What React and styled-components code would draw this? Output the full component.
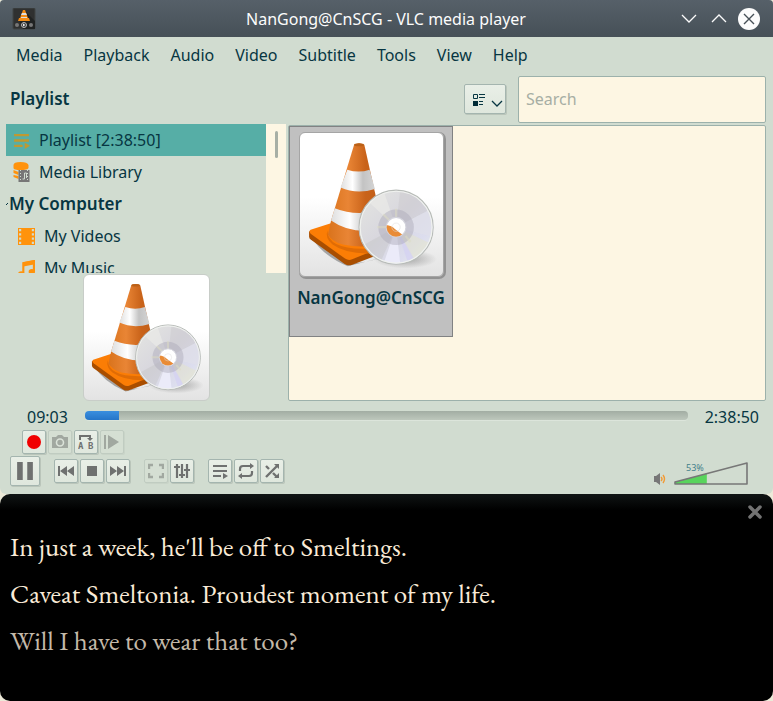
import React, { useId, useState } from "react";
import styled, { createGlobalStyle } from "styled-components";

const ink = "#073642";
const glyph = "#6f7170";

const GlobalStyle = createGlobalStyle`
  *, *::before, *::after { box-sizing: border-box; }
  body { margin: 0; background: #ece9d8; }
  button, input { font: inherit; color: inherit; }
  svg { display: block; flex: none; }
`;

const Desktop = styled.div`
  min-height: 100vh;
  display: flex;
  flex-direction: column;
  font: 16px/24px "Noto Sans", sans-serif;
  color: ${ink};
`;

const PlayerWindow = styled.div`
  padding-bottom: 6px;
  background: #d1dcd0;
  border-radius: 4px 4px 6px 6px;
  overflow: hidden;
`;

const TitleBar = styled.header`
  display: grid;
  grid-template-columns: 1fr auto 1fr;
  align-items: center;
  height: 37px;
  padding: 0 13px 0 12px;
  background: linear-gradient(#566069, #465057);
  color: #fcfcfc;
`;

const Title = styled.h1`
  margin: 0;
  font-size: 16px;
  font-weight: 400;
`;

const WindowButtons = styled.div`
  display: flex;
  justify-content: flex-end;
  gap: 8px;
`;

const PlainButton = styled.button`
  display: grid;
  place-items: center;
  width: 22px;
  height: 22px;
  padding: 0;
  border: 0;
  background: none;
`;

const MenuBar = styled.nav`
  display: flex;
  gap: 1px;
  height: 37px;
  padding: 0 6px 2px;
`;

const MenuButton = styled.button`
  padding: 0 10px;
  border: 0;
  background: none;
`;

const Heading = styled.h2`
  flex: 1;
  margin: 0;
  font-size: 17px;
  font-weight: 600;
`;

const ListHeader = styled.div`
  display: flex;
  align-items: center;
  height: 50px;
  padding: 0 7px 0 10px;
`;

const Raised = styled.button`
  display: grid;
  place-items: center;
  width: ${(p) => p.$size || 24}px;
  height: ${(p) => p.$size || 24}px;
  padding: 0;
  border: 1px solid #a4b5af;
  border-radius: 2px;
  background: linear-gradient(#e9efe7, #dfe7dd);
  box-shadow: 1px 1px 0 #bac5ba;
  &:disabled {
    border-color: #c0ccc1;
    background: #d5dfd3;
    box-shadow: 1px 1px 0 #c9d4c8;
  }
`;

const ViewButton = styled(Raised)`
  display: flex;
  align-items: center;
  gap: 6px;
  width: 42px;
  height: 30px;
  padding-left: 8px;
  margin-right: 12px;
`;

const Search = styled.input`
  width: 248px;
  height: 47px;
  padding: 0 7px;
  border: 1px solid #9cb1ab;
  border-radius: 2px;
  background: #fdf6e3;
  outline: 0;
  &::placeholder { color: #a7aea4; opacity: 1; }
`;

const Content = styled.main`
  display: flex;
  gap: 2px;
  padding: 0 7px 0 6px;
`;

const Sidebar = styled.aside`
  display: flex;
  flex-direction: column;
  align-items: center;
  width: 280px;
  gap: 1px;
`;

const TreePane = styled.div`
  display: flex;
  width: 100%;
  height: 149px;
`;

const Tree = styled.ul`
  flex: 1;
  margin: 0;
  padding: 0;
  overflow: hidden;
  list-style: none;
`;

const TreeRow = styled.li`
  display: flex;
  align-items: center;
  gap: 9px;
  height: 32px;
  padding-left: ${(p) => (p.$nested ? 12 : 7)}px;
  background: ${(p) => (p.$selected ? "#56aea6" : "transparent")};
`;

const TreeGroup = styled.li`
  display: flex;
  align-items: center;
  height: 32px;
  font-size: 17px;
  font-weight: 600;
`;

const Scroller = styled.div`
  display: flex;
  justify-content: center;
  width: 20px;
  padding-top: 7px;
  background: #fdf6e3;
`;

const ScrollHandle = styled.div`
  width: 3px;
  height: 27px;
  border-radius: 2px;
  background: #a7afa5;
`;

const Gallery = styled.section`
  flex: 1;
  min-height: 276px;
  margin-top: 1px;
  border: 1px solid #9cb1ab;
  border-radius: 2px;
  background: #fdf6e3;
`;

const Card = styled.figure`
  display: flex;
  flex-direction: column;
  align-items: center;
  gap: 9px;
  width: 164px;
  height: 211px;
  margin: 0;
  padding-top: 5px;
  border: 1px solid #818283;
  background: #c0c0c0;
`;

const CardTitle = styled.figcaption`
  font-size: 17px;
  font-weight: 600;
`;

const Frame = styled.div`
  border: 1px solid ${(p) => (p.$strong ? "#a5a5a5" : "#c8cdc8")};
  border-radius: 6px;
  box-shadow: ${(p) => (p.$strong ? "1px 1px 0 1px #929292" : "none")};
  background: linear-gradient(#fff 45%, #e3e3e3);
`;

const SeekRow = styled.div`
  display: flex;
  align-items: center;
  gap: 17px;
  height: 24px;
  margin-top: 4px;
  padding: 0 14px 0 27px;
`;

const Seek = styled.input`
  flex: 1;
  min-width: 0;
  height: 9px;
  margin: 0 0 4px;
  appearance: none;
  border-radius: 4px;
  background:
    linear-gradient(#3a8fdf, #2575c8) 0 0 / ${(p) => p.$done}% 100% no-repeat,
    linear-gradient(#a2ada3, #bdc7bc);
  box-shadow: 0 1px 0 #dce5db;
  &::-webkit-slider-thumb { appearance: none; width: 0; height: 9px; }
`;

const ExtraControls = styled.div`
  display: flex;
  gap: 2px;
  margin-top: 1px;
  padding-left: 22px;
`;

const Controls = styled.div`
  display: flex;
  align-items: center;
  gap: 14px;
  height: 34px;
  padding: 0 25px 0 10px;
`;

const Group = styled.div`
  display: flex;
  gap: 2px;
`;

const Volume = styled.div`
  display: flex;
  align-items: flex-end;
  gap: 8px;
  margin-left: auto;
  padding-top: 5px;
`;

const VolumeRamp = styled.div`
  position: relative;
`;

const VolumeInput = styled.input`
  position: absolute;
  inset: 0;
  width: 100%;
  height: 100%;
  margin: 0;
  opacity: 0;
`;

const Percent = styled.label`
  position: absolute;
  top: 0;
  left: 12px;
  font-size: 9px;
  line-height: 12px;
  color: #43808a;
`;

const Lyrics = styled.section`
  flex: 1;
  padding: 29px 10px 35px;
  position: relative;
  border-radius: 10px;
  background: linear-gradient(#101414, #000 16px);
  color: #faebd7;
  font: 27px/47px "EB Garamond", "Liberation Serif", serif;
`;

const Line = styled.p`
  margin: 0;
  color: ${(p) => (p.$dim ? "#c4b9a9" : "inherit")};
`;

const Dismiss = styled(PlainButton)`
  position: absolute;
  top: 7px;
  right: 7px;
`;

function Artwork({ size }) {
  const id = useId();
  const u = (n) => `url(#${id}${n})`;
  return (
    <svg width={size} height={size} viewBox="0 0 378 378" role="img" aria-label="Traffic cone and disc">
      <defs>
        <linearGradient id={id + "o"}>
          <stop offset="0" stopColor="#d9731c" /><stop offset=".35" stopColor="#e98535" />
          <stop offset=".65" stopColor="#c9631a" /><stop offset="1" stopColor="#bd5c17" />
        </linearGradient>
        <linearGradient id={id + "w"}>
          <stop offset="0" stopColor="#dedede" /><stop offset=".35" stopColor="#fff" />
          <stop offset=".65" stopColor="#c3c3c3" /><stop offset="1" stopColor="#d4d4d4" />
        </linearGradient>
        <linearGradient id={id + "d"} x1="0" y1="0" x2="1" y2="1">
          <stop offset="0" stopColor="#e5e6e1" /><stop offset=".45" stopColor="#d8d7de" />
          <stop offset=".75" stopColor="#dcddee" /><stop offset="1" stopColor="#e9efe9" />
        </linearGradient>
        <radialGradient id={id + "s"}>
          <stop offset="0" stopColor="#777" stopOpacity=".6" /><stop offset="1" stopColor="#777" stopOpacity="0" />
        </radialGradient>
        <clipPath id={id + "h"}><circle cx="254" cy="249" r="25" /></clipPath>
        <clipPath id={id + "c"}><circle cx="254" cy="249" r="95" /></clipPath>
      </defs>
      <ellipse cx="278" cy="333" rx="84" ry="25" fill={u("s")} />
      <path d="M28 272 Q60 325 126 352 L215 330 Q150 350 126 340Z" fill="#777" opacity=".6" />
      <path d="M24 260v14q0 5 5 8l89 64q9 6 20 2l64-24v-17Z" fill="#a94e00" />
      <path d="M28 256 Q22 260 29 267 L119 332Q128 338 138 334L225 298V250L90 236Z" fill="#fb7d05" />
      <path d="M72 258q2 48 93 48h40v11q-78 7-119-22-20-16-14-37Z" fill="#e06c05" />
      <path d="M143 31Q156 23 170 31L226 282Q188 310 113 295Q83 286 74 268L82 232Z" fill={u("o")} />
      <path d="M125 97Q155 107 184 97L198 148Q150 163 107 144Z" fill={u("w")} />
      <path d="M92 199Q146 221 212 204L224 252Q140 272 82 231Z" fill={u("w")} />
      <ellipse cx="156" cy="31" rx="13" ry="4" fill="#bb6117" />
      <circle cx="254" cy="249" r="98" fill={u("d")} stroke="#b8bcb8" strokeWidth="3" />
      <g clipPath={u("c")}>
        <path d="M254 249 265 149Q315 153 340 204Z" fill="#cac8cc" opacity=".45" />
        <path d="M254 249 340 204 356 276Z" fill="#e0e0e9" opacity=".7" />
        <path d="M254 249 345 292 303 341Z" fill="#e7e5c1" opacity=".4" />
        <path d="M254 249 212 343 170 295Z" fill="#bfc1bf" opacity=".35" />
        <path d="M254 249 179 180 221 153Z" fill="#e9e9e6" opacity=".8" />
        <path d="M254 249 265 345 222 342Z" fill="#efeffc" opacity=".8" />
        <path d="M254 249 300 330 285 341Z" fill="#d5d2f1" opacity=".8" />
      </g>
      <circle cx="254" cy="249" r="36" fill="none" stroke="#aaa8b8" strokeWidth="22" opacity=".45" />
      <path d="m220 215 17 17m-33 17h24m26-49v24m25 48 13 16" stroke="#dddcc2" strokeWidth="6" opacity=".5" />
      <circle cx="254" cy="249" r="26" fill="#fff" stroke="#d3d3dc" strokeWidth="3" />
      <path clipPath={u("h")} d="M225 243Q242 244 250 253L270 268 258 279H225Z" fill="#e98b36" />
      <circle cx="254" cy="249" r="11" fill="none" stroke="#ddd" strokeWidth="2" opacity=".7" />
      <circle cx="254" cy="249" r="95" fill="none" stroke="#f0f2ef" strokeWidth="3" />
    </svg>
  );
}

const drawings = {
  record: <circle cx="8" cy="8" r="7" fill="#f00000" />,
  camera: <><path d="M0 3h4l2-2h4l2 2h4v11H0Z" fill="#a1a8a0" /><circle cx="8" cy="8.5" r="3.5" fill="#a1a8a0" stroke="#dbe3d9" strokeWidth="1.6" /></>,
  ab: (
    <>
      <path d="M2 6V2h10v3" fill="none" stroke={glyph} strokeWidth="2" />
      <path d="M9 4h6l-3 3Z" fill={glyph} />
      <text x="0" y="15" fill={glyph} fontFamily="DejaVu Sans Mono, monospace" fontWeight="700" fontSize="9">A</text>
      <text x="10" y="15" fill={glyph} fontFamily="DejaVu Sans Mono, monospace" fontWeight="700" fontSize="9">B</text>
    </>
  ),
  frame: <path d="M0 1h2v14H0Zm4 0 11 7-11 7Z" fill="#a1a8a0" />,
  pause: <path d="M1 0h5v16h-5Zm9 0h5v16h-5Z" fill={glyph} />,
  prev: <path d="M0 3h2v10H0Zm9 0v10L2 8Zm7 0v10L9 8Z" fill={glyph} />,
  stop: <path d="M3 3h10v10H3Z" fill={glyph} />,
  next: <path d="M14 3h2v10h-2ZM0 3l7 5-7 5Zm7 0 7 5-7 5Z" fill={glyph} />,
  full: <path d="M1 6V2h4m6 0h4v4M1 10v4h4m6 0h4v-4" fill="none" stroke="#a1a8a0" strokeWidth="2.4" />,
  eq: <path d="M3 1v14M8 1v14M13 1v14M0 4h6M5 12h6m-1-5h6" fill="none" stroke={glyph} strokeWidth="2.2" />,
  list: <><path d="M1 3h14M1 8h14M1 13h8" stroke="currentColor" strokeWidth="2.2" /><path d="m11 10 5 3-5 3Z" fill="currentColor" /></>,
  loop: <><path d="M2 8V6q0-3 3-3h8M14 8v2q0 3-3 3H3" fill="none" stroke={glyph} strokeWidth="2.2" /><path d="m12 0 4 3-4 3ZM4 10l-4 3 4 3Z" fill={glyph} /></>,
  shuffle: <><path d="m2 14 11-11M2 3l3 3m4 4 4 4" stroke={glyph} strokeWidth="2.4" /><path d="M10 1h5v5Zm5 9v5h-5Z" fill={glyph} /></>,
  library: <><path d="M0 3q0-3 7-3t8 3v3q-1 2-8 2T0 6Zm0 5 5 2v3l-5-2Zm0 5 5 1v3l-5-2Z" fill="#ff930c" /><path d="M5 8h11v12H5Z" fill="#777" /><path d="M7 8v12M14 8v12" stroke="#d1dcd0" strokeDasharray="1 2" /><path d="M9 17h2v-6h2v5" fill="none" stroke="#d1dcd0" /></>,
  film: <><path d="M0 0h16v16H0Z" fill="#ff930c" /><path d="M2 1v15M14 1v15" stroke="#d1dcd0" strokeWidth="2" strokeDasharray="2 2" /></>,
  music: <><path d="M5 13V3l10-2v10" fill="none" stroke="#ff930c" strokeWidth="2" /><path d="M5 2 16 0v4L5 6Z" fill="#ff930c" /><ellipse cx="3" cy="13" rx="3" ry="2.5" fill="#ff930c" /><ellipse cx="13" cy="11" rx="3" ry="2.5" fill="#ff930c" /></>,
};

const Icon = ({ name, color, size = 16, height }) => (
  <svg width={size} height={height || size} viewBox={`0 0 16 ${height || 16}`} color={color || glyph} aria-hidden="true">
    {drawings[name]}
  </svg>
);

const Tool = ({ name, label, disabled }) => (
  <Raised aria-label={label} title={label} disabled={disabled}><Icon name={name} /></Raised>
);

const AppIcon = () => (
  <svg width="24" height="22" viewBox="0 0 24 22" aria-hidden="true">
    <rect x="1" y="0" width="22" height="21" rx="1" fill="#2f3030" stroke="#414444" />
    <path d="m12 2 11 11v8H11L7 12Z" fill="#202222" />
    <path d="m11 2h2l3 8h1l1 3H6l1-3h1Z" fill="#f28b13" />
    <path d="M10 5h4l1 2H9Zm-1 4h6v1H9Z" fill="#ddd" />
    <circle cx="5" cy="17" r="2" fill="#777" /><circle cx="19" cy="17" r="2" fill="#777" />
    <circle cx="12" cy="17" r="2.5" fill="#333" stroke="#bbb" /><path d="m11 15.500 2.500 1.500-2.500 1.500Z" fill="#eee" />
  </svg>
);

const menus = ["Media", "Playback", "Audio", "Video", "Subtitle", "Tools", "View", "Help"];

export default function App() {
  const [position, setPosition] = useState(543);
  const [volume, setVolume] = useState(53);
  const length = 9530;
  const level = 1 + volume * 0.6;
  return (
    <Desktop>
      <GlobalStyle />
      <PlayerWindow>
        <TitleBar>
          <AppIcon />
          <Title>NanGong@CnSCG - VLC media player</Title>
          <WindowButtons>
            <PlainButton aria-label="Minimize">
              <svg width="16" height="10"><path d="m1 1 7 7 7-7" fill="none" stroke="#fcfcfc" strokeWidth="1.3" /></svg>
            </PlainButton>
            <PlainButton aria-label="Maximize">
              <svg width="16" height="10"><path d="m1 8 7-7 7 7" fill="none" stroke="#fcfcfc" strokeWidth="1.3" /></svg>
            </PlainButton>
            <PlainButton aria-label="Close">
              <svg width="22" height="22"><circle cx="11" cy="11" r="11" fill="#fcfcfc" /><path d="m6 6 10 10M16 6 6 16" stroke="#475057" strokeWidth="1.4" /></svg>
            </PlainButton>
          </WindowButtons>
        </TitleBar>
        <MenuBar aria-label="Main menu">
          {menus.map((m) => <MenuButton key={m}>{m}</MenuButton>)}
        </MenuBar>
        <ListHeader>
          <Heading>Playlist</Heading>
          <ViewButton aria-label="Change playlist view">
            <svg width="12" height="13" viewBox="0 0 12 13"><path d="M.5 1.500h4v4h-4ZM6 1.500h6M6 4.500h6M6 8.500h4M6 11.500h4" fill="none" stroke={ink} /><path d="M0 8h5v5H0Z" fill="#002b36" /></svg>
            <svg width="12" height="18" viewBox="0 0 12 18"><path d="m1 11 5 5 5-5" fill="none" stroke={ink} strokeWidth="1.300" /></svg>
          </ViewButton>
          <Search type="search" placeholder="Search" aria-label="Search" />
        </ListHeader>
        <Content>
          <Sidebar>
            <TreePane>
              <Tree>
                <TreeRow $selected><Icon name="list" color="#bf9931" size={17} />Playlist [2:38:50]</TreeRow>
                <TreeRow><Icon name="library" size={17} height={20} />Media Library</TreeRow>
                <TreeGroup>
                  <svg width="3" height="16"><path d="m0 9 2-2" stroke={ink} fill="none" /></svg>
                  My Computer
                </TreeGroup>
                <TreeRow $nested><Icon name="film" size={17} />My Videos</TreeRow>
                <TreeRow $nested><Icon name="music" size={17} />My Music</TreeRow>
              </Tree>
              <Scroller><ScrollHandle /></Scroller>
            </TreePane>
            <Frame><Artwork size={125} /></Frame>
          </Sidebar>
          <Gallery>
            <Card>
              <Frame $strong><Artwork size={143} /></Frame>
              <CardTitle>NanGong@CnSCG</CardTitle>
            </Card>
          </Gallery>
        </Content>
        <SeekRow>
          <span>09:03</span>
          <Seek type="range" aria-label="Position" min="0" max={length} value={position}
            $done={(position / length) * 100}
            onChange={(e) => setPosition(Number(e.target.value))} />
          <span>2:38:50</span>
        </SeekRow>
        <ExtraControls>
          <Tool name="record" label="Record" />
          <Tool name="camera" label="Snapshot" disabled />
          <Tool name="ab" label="Loop A to B" />
          <Tool name="frame" label="Frame by frame" disabled />
        </ExtraControls>
        <Controls>
          <Raised $size={30} aria-label="Pause"><Icon name="pause" size={18} /></Raised>
          <Group>
            <Tool name="prev" label="Previous" />
            <Tool name="stop" label="Stop" />
            <Tool name="next" label="Next" />
          </Group>
          <Group>
            <Tool name="full" label="Fullscreen" disabled />
            <Tool name="eq" label="Extended settings" />
          </Group>
          <Group>
            <Tool name="list" label="Toggle playlist" />
            <Tool name="loop" label="Loop" />
            <Tool name="shuffle" label="Shuffle" />
          </Group>
          <Volume>
            <svg width="12" height="12" viewBox="0 0 12 12" aria-hidden="true">
              <path d="M0 3h2l4-3v12L2 9H0Z" fill="#777" /><path d="M7 4q2 2 0 4m2-6q3 4 0 8" fill="none" stroke="#f19a35" strokeWidth="1.400" />
            </svg>
            <VolumeRamp>
              <svg width="74" height="23" viewBox="0 0 74 23" aria-hidden="true">
                <path d={`M1 20 ${level} ${20 - level * 0.26}V22H1Z`} fill="#58d45c" />
                <path d="M1 20 73 1v21H1Z" fill="none" stroke="#777" strokeWidth="1.600" strokeLinejoin="round" />
              </svg>
              <Percent htmlFor="volume">{volume}%</Percent>
              <VolumeInput id="volume" type="range" min="0" max="125" value={volume}
                onChange={(e) => setVolume(Number(e.target.value))} />
            </VolumeRamp>
          </Volume>
        </Controls>
      </PlayerWindow>
      <Lyrics>
        <Dismiss aria-label="Close subtitles">
          <svg width="14" height="14"><path d="m2 2 10 10M12 2 2 12" stroke="#737373" strokeWidth="3.500" strokeLinecap="round" /></svg>
        </Dismiss>
        <Line>In just a week, he'll be off to Smeltings.</Line>
        <Line>Caveat Smeltonia. Proudest moment of my life.</Line>
        <Line $dim>Will I have to wear that too?</Line>
      </Lyrics>
    </Desktop>
  );
}
